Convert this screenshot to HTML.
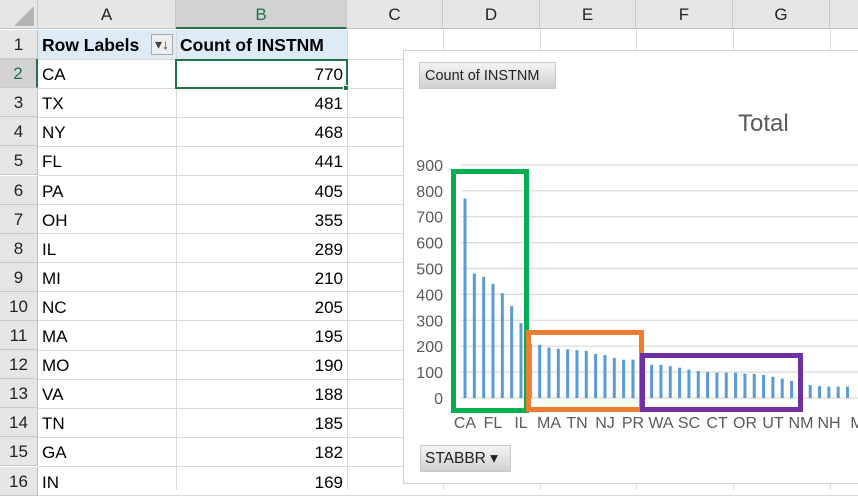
<!DOCTYPE html>
<html><head><meta charset="utf-8"><style>
*{margin:0;padding:0;box-sizing:border-box}
body{width:858px;height:486px;overflow:hidden;background:#fff;font-family:"Liberation Sans",sans-serif;position:relative}
.a{position:absolute}
.hd{position:absolute;top:0;height:29px;background:#e6e6e6;border-right:1px solid #c8c8c8;border-bottom:1px solid #c0c0c0;text-align:center;line-height:29px;font-size:17px;color:#222}
.rn{position:absolute;left:0;width:38px;background:#e6e6e6;border-bottom:1px solid #c8c8c8;border-right:1px solid #c0c0c0;text-align:center;font-size:17px;color:#222}
.cell{position:absolute;font-size:17px;color:#000;white-space:nowrap}
.gl{position:absolute;height:1px;background:#dadada}
.vl{position:absolute;width:1px;background:#dadada}
</style></head><body>
<div class="hd" style="left:0;width:38px"><svg width="38" height="29"><polygon points="34,6 34,26 14,26" fill="#b4b4b4"/></svg></div>
<div class="hd" style="left:38px;width:138px">A</div>
<div class="hd" style="left:176px;width:171px;background:#d2d2d2;color:#217346;border-bottom:2px solid #217346">B</div>
<div class="hd" style="left:347px;width:96px">C</div>
<div class="hd" style="left:443px;width:97px">D</div>
<div class="hd" style="left:540px;width:96px">E</div>
<div class="hd" style="left:636px;width:97px">F</div>
<div class="hd" style="left:733px;width:97px">G</div>
<div class="hd" style="left:830px;width:40px"></div>
<div id="grid"></div>
<script>
var labels=["Row Labels","CA","TX","NY","FL","PA","OH","IL","MI","NC","MA","MO","VA","TN","GA","IN"];
var vals=["Count of INSTNM","770","481","468","441","405","355","289","210","205","195","190","188","185","182","169"];
var h="";
for(var i=0;i<16;i++){
 var t=30+i*29.1;
 h+='<div class="rn" style="top:'+t+'px;height:29.1px;line-height:29px;'+(i==1?'background:#d2d2d2;color:#217346;border-right:2px solid #217346':'')+'">'+(i+1)+'</div>';
 h+='<div class="gl" style="left:38px;width:820px;top:'+(t+28.5)+'px"></div>';
 if(i==0){
  h+='<div class="a" style="left:38px;top:30px;width:309px;height:29px;background:#ddebf7"></div>';
  h+='<div class="cell" style="left:42px;top:'+(t+5)+'px;font-weight:bold;font-size:17.5px">Row Labels</div>';
  h+='<div class="a" style="left:151px;top:34px;width:22px;height:21px;border:1px solid #aaa;background:#eee;font-size:14px;text-align:center;line-height:19px;color:#444">&#9662;&#8595;</div>';
  h+='<div class="cell" style="left:180px;top:'+(t+5)+'px;font-weight:bold;font-size:17.5px">Count of INSTNM</div>';
 } else {
  h+='<div class="cell" style="left:42px;top:'+(t+6)+'px">'+labels[i]+'</div>';
  h+='<div class="cell" style="left:176px;width:167px;text-align:right;top:'+(t+6)+'px">'+vals[i]+'</div>';
 }
}
[176,347,443,540,636,733,830].forEach(function(x){h+='<div class="vl" style="left:'+x+'px;top:30px;height:460px"></div>';});
document.getElementById('grid').innerHTML=h;
</script>
<div class="a" style="left:175px;top:59px;width:173px;height:30px;border:2px solid #217346"></div>
<div class="a" style="left:343px;top:85px;width:6px;height:6px;background:#217346;border:1px solid #fff"></div>
<div class="a" style="left:403px;top:50px;width:470px;height:434px;background:#fff;border:1px solid #d0d0d0"></div>
<div class="a" style="left:419px;top:62px;width:137px;height:27px;background:linear-gradient(#f4f4f4,#d0d0d0);border:1px solid #c8c8c8;font-size:14.5px;line-height:26px;padding-left:5px;color:#222;white-space:nowrap">Count of INSTNM</div>
<div class="a" style="left:738px;top:110px;font-size:24px;color:#595959">Total</div>
<svg class="a" style="left:0;top:0" width="858" height="486">
<g id="g"></g>
</svg>
<div class="a" style="left:420px;top:445px;width:91px;height:27px;background:linear-gradient(#f4f4f4,#d0d0d0);border:1px solid #c8c8c8;font-size:15.5px;line-height:26px;padding-left:4px;color:#222">STABBR &#9662;</div>
<script>
var vs=[770,481,468,441,405,355,289,210,205,195,190,188,185,182,170,166,155,148,148,140,128,128,123,117,110,104,101,98,98,98,94,93,89,82,75,66,51,50,46,44,44,44];
var s="";
for(var k=0;k<=9;k++){var y=398-25.9*k;s+='<line x1="461" x2="858" y1="'+y+'" y2="'+y+'" stroke="#d9d9d9" stroke-width="1.2"/>';
s+='<text x="443" y="'+(y+6)+'" text-anchor="end" font-size="16" fill="#595959" font-family="Liberation Sans">'+(k*100)+'</text>';}
vs.forEach(function(v,i){var x=465+i*9.33;var hh=v*0.259;s+='<rect x="'+(x-1.5)+'" y="'+(398-hh)+'" width="3" height="'+hh+'" fill="#5b9bd5"/>';});
var lb=["CA","FL","IL","MA","TN","NJ","PR","WA","SC","CT","OR","UT","NM","NH","M"];
lb.forEach(function(l,i){s+='<text x="'+(465+i*28)+'" y="428" text-anchor="middle" font-size="16" fill="#595959" font-family="Liberation Sans">'+l+'</text>';});
s+='<rect x="453.5" y="171.5" width="73" height="239" fill="none" stroke="#00b050" stroke-width="5"/>';
s+='<rect x="528.5" y="332.5" width="113" height="77" fill="none" stroke="#ed7d31" stroke-width="5"/>';
s+='<rect x="642.5" y="355.5" width="158" height="54" fill="none" stroke="#7030a0" stroke-width="5"/>';
document.getElementById('g').innerHTML=s;
</script>
</body></html>
